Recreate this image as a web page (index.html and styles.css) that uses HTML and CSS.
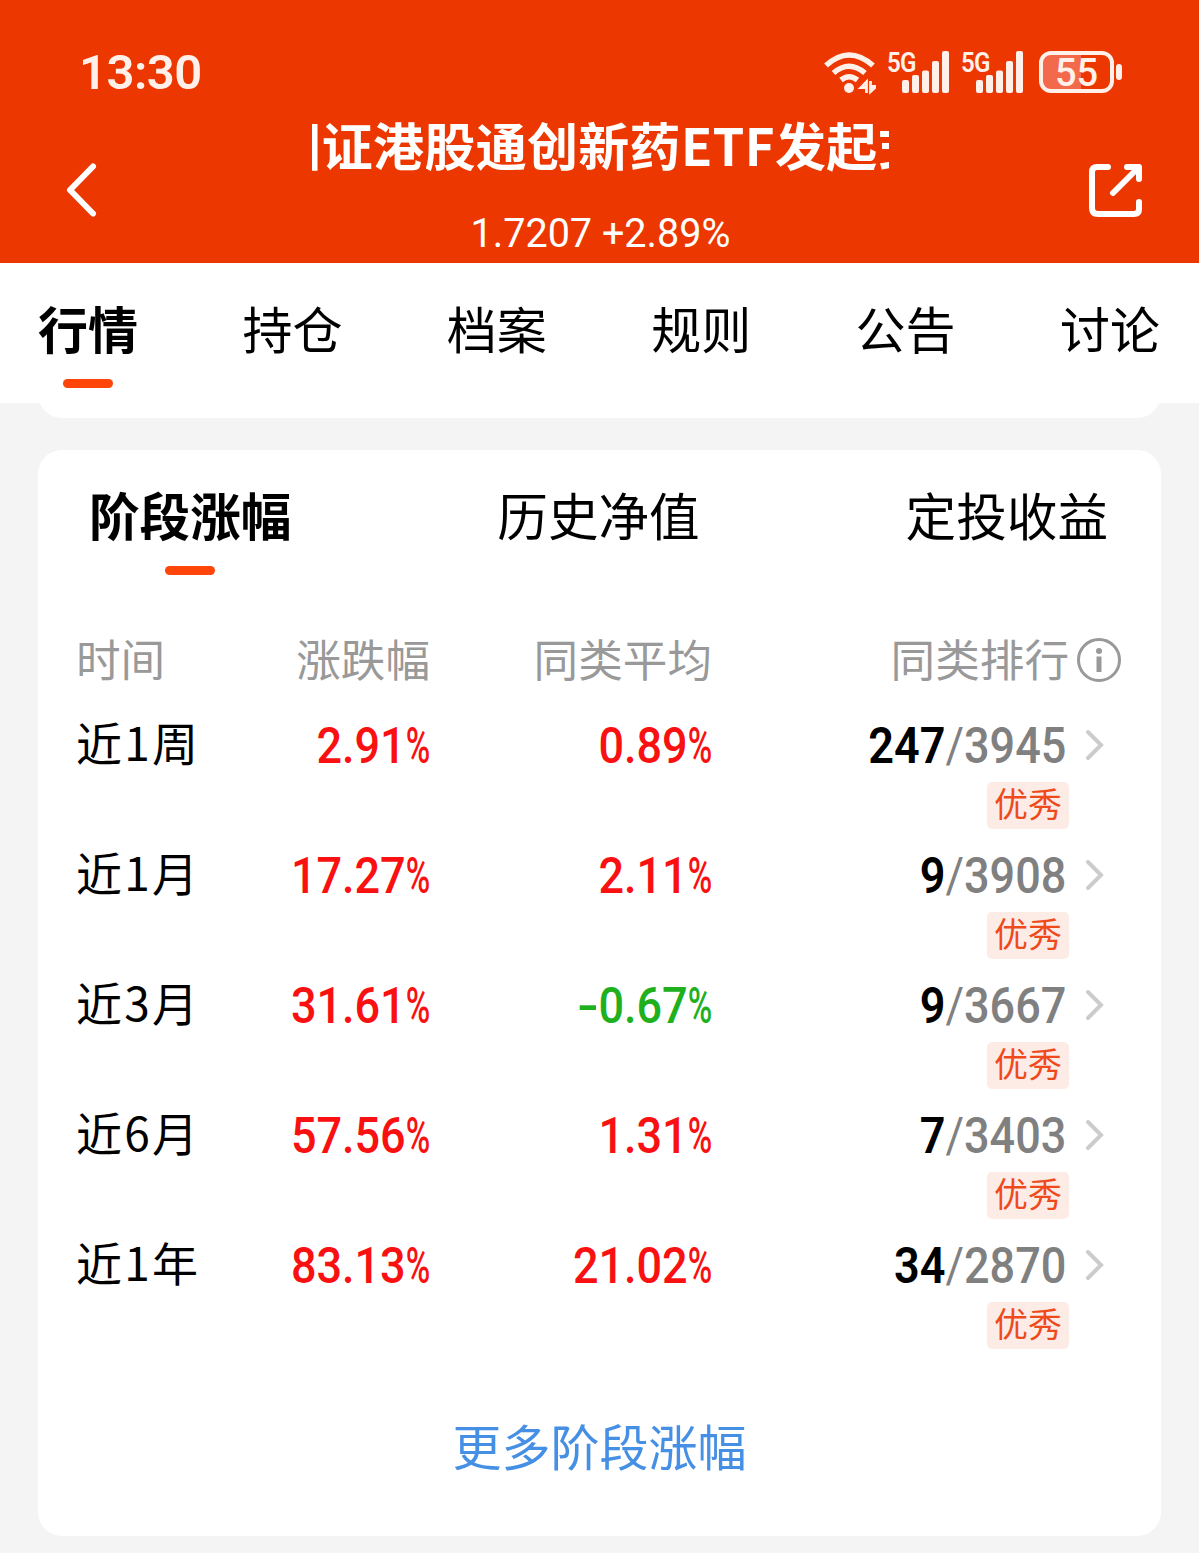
FILE: index.html
```html
<!DOCTYPE html>
<html lang="zh-CN">
<head>
    <meta charset="UTF-8">
    <meta name="viewport" content="width=device-width, initial-scale=1.0">
    <title>基金详情</title>
    <link rel="stylesheet" href="styles.css">
</head>
<body>
    <header class="header">
        <div class="status">
            <span class="time">13:30</span>
            <div class="status-icons">
                <svg class="wifi" width="54" height="46" viewBox="0 0 54 46" fill="none" stroke="#fff0ea" stroke-width="5.5">
                    <path d="M4 16.500 Q27 -4.500 51 16.500" />
                    <path d="M11.500 24 Q27 10.500 43 24" />
                    <path d="M19 31 Q27 24.500 35.500 31" />
                    <circle cx="27" cy="39" r="5" fill="#fff0ea" stroke="none" />
                    <path d="M44.500 44 V33 L39 38.500 H44 M48.500 32 V42.500 L54 37.500 H49" stroke-width="2.800" />
                </svg>
                <div class="signal">
                    <span class="net">5G</span>
                    <svg class="bars" width="48" height="42" viewBox="0 0 48 42" fill="#fff0ea">
                        <rect x="0" y="29" width="7" height="13" rx="2" />
                        <rect x="10" y="24" width="7" height="18" rx="2" />
                        <rect x="20" y="19.500" width="7" height="22.500" rx="2" />
                        <rect x="30" y="10" width="7" height="32" rx="2" />
                        <rect x="40" y="0" width="7" height="42" rx="2" />
                    </svg>
                </div>
                <div class="signal">
                    <span class="net">5G</span>
                    <svg class="bars" width="48" height="42" viewBox="0 0 48 42" fill="#fff0ea">
                        <rect x="0" y="29" width="7" height="13" rx="2" />
                        <rect x="10" y="24" width="7" height="18" rx="2" />
                        <rect x="20" y="19.500" width="7" height="22.500" rx="2" />
                        <rect x="30" y="10" width="7" height="32" rx="2" />
                        <rect x="40" y="0" width="7" height="42" rx="2" />
                    </svg>
                </div>
                <div class="battery"><span>55</span></div>
                <div class="battery-cap"></div>
            </div>
        </div>
        <div class="nav">
            <svg class="back" width="34" height="56" viewBox="0 0 34 56" fill="none" stroke="#fff" stroke-width="6" stroke-linecap="round" stroke-linejoin="round">
                <path d="M28 4.500 L5 28 L28 51.500" />
            </svg>
            <div class="fund">
                <div class="fund-name"><span>国证港股通创新药ETF发起式</span></div>
                <div class="fund-value">1.7207 +2.89%</div>
            </div>
            <svg class="share" width="56" height="56" viewBox="0 0 56 56" fill="none" stroke="#fff" stroke-width="6" stroke-linecap="round" stroke-linejoin="round">
                <path d="M20 5 H9 Q4 5 4 10 V46 Q4 52 10 52 H46 Q51 52 51 47 V40" />
                <path d="M39 5 H51 V17 M50 6 L25 31" />
            </svg>
        </div>
    </header>

    <nav class="tabs">
        <a class="tab active">行情</a>
        <a class="tab">持仓</a>
        <a class="tab">档案</a>
        <a class="tab">规则</a>
        <a class="tab">公告</a>
        <a class="tab">讨论</a>
    </nav>
    <div class="prev-card"></div>

    <section class="card">
        <div class="sub-tabs">
            <a class="tab active">阶段涨幅</a>
            <a class="tab">历史净值</a>
            <a class="tab">定投收益</a>
        </div>

        <div class="row head">
            <span>时间</span>
            <span class="right">涨跌幅</span>
            <span class="right">同类平均</span>
            <span class="right">同类排行</span>
            <svg class="info" width="46" height="46" viewBox="0 0 46 46" fill="none" stroke="#999">
                <circle cx="23" cy="23" r="20.500" stroke-width="3" />
                <circle cx="23" cy="14" r="3" fill="#999" stroke="none" />
                <path d="M23 19.500 V35" stroke-width="5" />
            </svg>
        </div>

        <div class="row">
            <span class="period">近<i>1</i>周</span>
            <span class="num up">2.91<b>%</b></span>
            <span class="num up">0.89<b>%</b></span>
            <span class="num rank"><strong>247</strong><em>/</em>3945</span>
            <svg class="arrow" width="20" height="32" viewBox="0 0 20 32"><path d="M3 3 L16 16 L3 29" /></svg>
            <span class="badge">优秀</span>
        </div>
        <div class="row">
            <span class="period">近<i>1</i>月</span>
            <span class="num up">17.27<b>%</b></span>
            <span class="num up">2.11<b>%</b></span>
            <span class="num rank"><strong>9</strong><em>/</em>3908</span>
            <svg class="arrow" width="20" height="32" viewBox="0 0 20 32"><path d="M3 3 L16 16 L3 29" /></svg>
            <span class="badge">优秀</span>
        </div>
        <div class="row">
            <span class="period">近<i>3</i>月</span>
            <span class="num up">31.61<b>%</b></span>
            <span class="num down"><u>-</u>0.67<b>%</b></span>
            <span class="num rank"><strong>9</strong><em>/</em>3667</span>
            <svg class="arrow" width="20" height="32" viewBox="0 0 20 32"><path d="M3 3 L16 16 L3 29" /></svg>
            <span class="badge">优秀</span>
        </div>
        <div class="row">
            <span class="period">近<i>6</i>月</span>
            <span class="num up">57.56<b>%</b></span>
            <span class="num up">1.31<b>%</b></span>
            <span class="num rank"><strong>7</strong><em>/</em>3403</span>
            <svg class="arrow" width="20" height="32" viewBox="0 0 20 32"><path d="M3 3 L16 16 L3 29" /></svg>
            <span class="badge">优秀</span>
        </div>
        <div class="row">
            <span class="period">近<i>1</i>年</span>
            <span class="num up">83.13<b>%</b></span>
            <span class="num up">21.02<b>%</b></span>
            <span class="num rank"><strong>34</strong><em>/</em>2870</span>
            <svg class="arrow" width="20" height="32" viewBox="0 0 20 32"><path d="M3 3 L16 16 L3 29" /></svg>
            <span class="badge">优秀</span>
        </div>

        <a class="more">更多阶段涨幅</a>
    </section>
</body>
</html>
```
FILE: styles.css
```css
* { box-sizing: border-box; }
body { margin: 0; height: 1553px; overflow: hidden; background: #f4f4f4; color: #000; font-family: "Noto Sans CJK SC", sans-serif; }

/* header */
.header { height: 263px; background: #ec3800; color: #fff; padding-top: 42px; }
.status { display: flex; justify-content: space-between; height: 60px; padding: 0 77px 0 79px; align-items: center; color: #fff0ea; font-family: Roboto, sans-serif; }
.time { font-size: 49px; font-weight: 600; line-height: 60px; letter-spacing: -.5px; padding-top: 2px; }
.status-icons { display: flex; align-items: center; }
.wifi { margin-right: 11px; }
.signal { display: flex; height: 42px; width: 62px; margin-right: 12px; }
.signal + .battery { margin-left: 4px; }
.net { width: 15px; font-size: 28px; font-weight: 600; line-height: 24px; letter-spacing: -1px; transform: scaleX(.86); transform-origin: left; }
.bars { flex: none; }
.battery { width: 75px; height: 42px; border: 4px solid #fff0ea; border-radius: 12px; background: linear-gradient(to right, #f2694b 57%, #ec3800 57%); text-align: center; font-size: 38px; font-weight: 500; line-height: 36px; }
.battery-cap { width: 6px; height: 16px; margin-left: 2px; border-radius: 3px; background: #fff0ea; }
.nav { display: flex; justify-content: space-between; padding: 0 55px 0 65px; }
.back { margin-top: 60px; }
.share { margin-top: 60px; }
.fund { width: 577px; text-align: center; margin-left: 13px; }
.fund-name { height: 92px; overflow: hidden; white-space: nowrap; text-align: left; font-size: 51px; font-weight: 700; line-height: 85px; letter-spacing: .3px; }
.fund-name span { margin-left: -41px; }
.fund-value { font-family: Roboto, sans-serif; font-size: 41px; line-height: 78px; transform: scaleX(.965); }

/* tabs */
.tabs { display: flex; justify-content: space-between; height: 140px; padding: 0 39px 0 38px; background: #fff; }
.tab { display: flex; flex-direction: column; align-items: center; font-size: 50px; line-height: 74px; padding-top: 27px; }
.tab.active { font-weight: 700; }
.tab.active::after { content: ""; width: 50px; height: 9px; margin-top: 15px; border-radius: 5px; background: #ff4509; }
.prev-card { height: 28px; margin: -13px 38px 0; background: #fff; border-radius: 0 0 24px 24px; }

/* card */
.card { height: 1086px; margin: 32px 38px 0; background: #fff; border-radius: 24px; }
.sub-tabs { display: flex; justify-content: space-between; height: 168px; padding: 0 53px 0 51px; }
.sub-tabs .tab { font-size: 50.6px; }
.row { display: grid; grid-template-columns: 160px 194px 282px 357px 54px; grid-template-rows: 70px 60px; height: 130px; padding-left: 38px; align-items: center; }
.head { height: 92px; grid-template-rows: 84px; color: #999; font-size: 44.600px; }
.head span { padding-bottom: 6px; }
.right { text-align: right; }
.info { margin-left: 7px; }
.period { font-size: 46px; line-height: 70px; padding-bottom: 8px; white-space: nowrap; }
.period i { display: inline-block; width: 30px; font-style: normal; text-align: center; }
.num { font-family: Roboto, sans-serif; font-size: 50px; font-weight: 500; text-align: right; transform: scaleX(.9); transform-origin: right; padding-top: 2px; }
.num b { display: inline-block; width: 27px; font-weight: 500; transform: scaleX(.74); transform-origin: left; }
.num u { display: inline-block; width: 23px; text-align: right; text-decoration: none; transform: scaleX(1.4); transform-origin: right; }
.up { color: #f91010; }
.down { color: #20b01d; }
.rank { color: #808080; padding-right: 3px; }
.rank strong { color: #000; font-weight: 600; }
.rank em { font-style: normal; font-weight: 400; }
.arrow { margin-left: 16px; fill: none; stroke: #ccc; stroke-width: 4; stroke-linecap: round; }
.badge { grid-column: 4; justify-self: end; align-self: start; margin-top: 2px; width: 82px; height: 47px; border-radius: 5px; background: #fdece6; color: #ee4a1b; font-size: 34px; line-height: 42px; text-align: center; }
.more { display: block; margin-top: 49px; text-align: center; color: #458fe4; font-size: 49px; line-height: 72px; }
```
